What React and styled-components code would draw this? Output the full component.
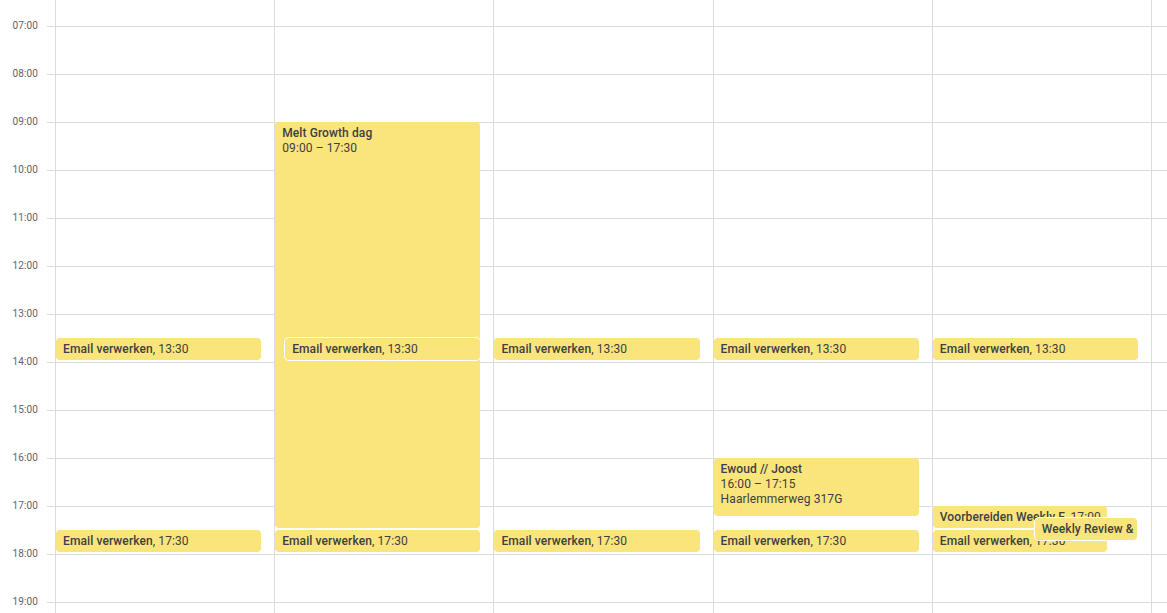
import React from "react";
import styled, { createGlobalStyle, css } from "styled-components";

const GlobalStyle = createGlobalStyle`
  html, body { margin: 0; padding: 0; background: #fff; }
  body { font-family: Roboto, "Noto Sans", Arial, sans-serif; }
`;

const LINE = "#dadce0";
const EVENT = "#fae47c";
const TEXT = "#3c4043";
const HOUR_H = 48;
const TOP_OFFSET = 26; // distance of the 07:00 line from the top
const FIRST_HOUR = 7;
const HOURS = [7, 8, 9, 10, 11, 12, 13, 14, 15, 16, 17, 18, 19];

const Calendar = styled.div`
  display: grid;
  grid-template-columns: 55px repeat(5, 1fr) 16px;
  height: 613px;
  overflow: hidden;
  background: #fff;
`;

const Gutter = styled.div`
  display: flex;
  flex-direction: column;
`;

const LeadSlot = styled.div`
  height: ${TOP_OFFSET}px;
  flex: none;
`;

const GutterSlot = styled.div`
  height: ${HOUR_H}px;
  flex: none;
  display: flex;
  align-items: flex-start;
  justify-content: flex-end;
  gap: 9px;
`;

const TimeLabel = styled.span`
  font-size: 10px;
  line-height: 12px;
  margin-top: -6px;
  color: #5f6368;
  letter-spacing: 0.1px;
`;

const Tick = styled.span`
  width: 8px;
  border-top: 1px solid ${LINE};
`;

const DayColumn = styled.div`
  position: relative;
  display: flex;
  flex-direction: column;
  border-left: 1px solid ${LINE};
`;

const HourRow = styled.div`
  height: ${HOUR_H}px;
  flex: none;
  box-sizing: border-box;
  border-top: 1px solid ${LINE};
`;

const Event = styled.div`
  position: absolute;
  box-sizing: border-box;
  background: ${EVENT};
  color: ${TEXT};
  border-radius: 4px;
  font-size: 12px;
  letter-spacing: 0.1px;
  overflow: hidden;
  white-space: nowrap;
  z-index: ${(p) => (p.$outlined ? 2 : 1)};
  ${(p) =>
    p.$outlined &&
    css`
      box-shadow: 0 0 0 1px #fff;
    `}
  ${(p) =>
    p.$multi
      ? css`
          padding: 4px 7px;
          line-height: 15px;
        `
      : css`
          padding: 0 7px;
          line-height: 22px;
        `}
`;

const Title = styled.span`
  font-weight: 500;
`;

const Line = styled.div``;

const TitleLine = styled.div`
  font-weight: 500;
`;

const toY = (h) => TOP_OFFSET + (h - FIRST_HOUR) * HOUR_H;

const email = (time, h, extra = {}) => ({
  title: "Email verwerken",
  time,
  start: h,
  end: h + 0.5,
  ...extra,
});

const days = [
  [email("13:30", 13.5), email("17:30", 17.5)],
  [
    {
      title: "Melt Growth dag",
      lines: ["09:00 – 17:30"],
      start: 9,
      end: 17.5,
    },
    email("13:30", 13.5, { left: 10, outlined: true }),
    email("17:30", 17.5),
  ],
  [email("13:30", 13.5), email("17:30", 17.5)],
  [
    email("13:30", 13.5),
    {
      title: "Ewoud // Joost",
      lines: ["16:00 – 17:15", "Haarlemmerweg 317G"],
      start: 16,
      end: 17.25,
    },
    email("17:30", 17.5),
  ],
  [
    email("13:30", 13.5),
    {
      title: "Voorbereiden Weekly F",
      time: "17:00",
      start: 17,
      end: 17.5,
      right: 44,
    },
    email("17:30", 17.5, { right: 44 }),
    {
      title: "Weekly Review &",
      start: 17.25,
      end: 17.75,
      left: 102,
      right: 14,
      outlined: true,
    },
  ],
];

function CalendarEvent({ ev }) {
  const top = toY(ev.start);
  const height = (ev.end - ev.start) * HOUR_H - 2;
  const style = {
    top,
    height,
    left: ev.left ?? 0,
    right: ev.right ?? 13,
  };
  if (ev.lines) {
    return (
      <Event $multi $outlined={ev.outlined} style={style}>
        <TitleLine>{ev.title}</TitleLine>
        {ev.lines.map((l) => (
          <Line key={l}>{l}</Line>
        ))}
      </Event>
    );
  }
  return (
    <Event $outlined={ev.outlined} style={style}>
      <Title>{ev.title}</Title>
      {ev.time ? `, ${ev.time}` : ""}
    </Event>
  );
}

function HourRows() {
  return (
    <>
      <LeadSlot />
      {HOURS.map((h) => (
        <HourRow key={h} />
      ))}
    </>
  );
}

export default function App() {
  return (
    <>
      <GlobalStyle />
      <Calendar>
        <Gutter>
          <LeadSlot />
          {HOURS.map((h) => (
            <GutterSlot key={h}>
              <TimeLabel>{String(h).padStart(2, "0")}:00</TimeLabel>
              <Tick />
            </GutterSlot>
          ))}
        </Gutter>
        {days.map((events, i) => (
          <DayColumn key={i}>
            <HourRows />
            {events.map((ev, j) => (
              <CalendarEvent key={j} ev={ev} />
            ))}
          </DayColumn>
        ))}
        <DayColumn>
          <HourRows />
        </DayColumn>
      </Calendar>
    </>
  );
}
